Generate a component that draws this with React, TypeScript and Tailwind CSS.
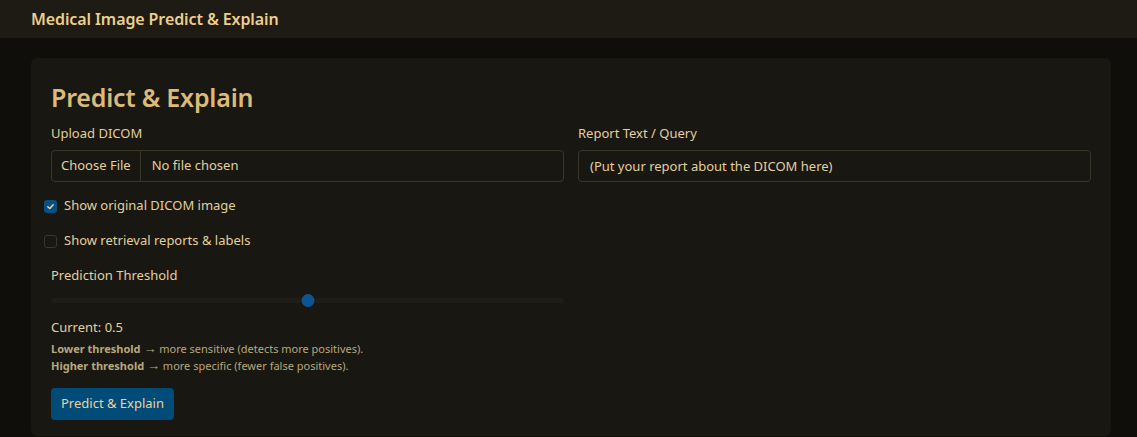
import { useState } from 'react';

export default function App() {
  const [showOriginal, setShowOriginal] = useState(true);
  const [showRetrieval, setShowRetrieval] = useState(false);
  const [threshold, setThreshold] = useState(0.5);

  return (
    <div className="min-h-[437px] bg-[#0f0e0b] text-[#e4cf9d] font-['Noto_Sans',sans-serif]">
      <header className="h-[38px] bg-[#1e1b15] px-[31px] flex items-center">
        <h1 className="text-[16px] font-semibold text-[#eccf8c] tracking-[-0.1px]">Medical Image Predict &amp; Explain</h1>
      </header>

      <main className="px-[31px] pt-[20px] pr-[26px]">
        <section className="bg-[#181712] rounded-md px-[20px] pt-[21px] pb-[16px]">
          <h2 className="text-[25px] font-semibold text-[#dcbb79] leading-[36px] tracking-[-0.2px]">Predict &amp; Explain</h2>

          <div className="grid grid-cols-2 gap-x-[14px] mt-[9px]">
            <div>
              <label className="block text-[13px] leading-[18px] mb-[8px]">Upload DICOM</label>
              <div className="h-[32px] flex items-center border border-[#3a3729] rounded-[4px] bg-[#181712] text-[13px]">
                <button className="h-full px-[9px] border-r border-[#3a3729] text-[#e4cf9d]">Choose File</button>
                <span className="px-[11px]">No file chosen</span>
              </div>

              <label className="flex items-center gap-[7px] mt-[16px] ml-[-7px] text-[13px] h-[16px] cursor-pointer">
                <span
                  onClick={() => setShowOriginal(!showOriginal)}
                  className={
                    showOriginal
                      ? 'w-[13px] h-[13px] rounded-[3px] bg-[#0a4f80] flex items-center justify-center'
                      : 'w-[13px] h-[13px] rounded-[3px] border border-[#3a3729] bg-[#181712]'
                  }
                >
                  {showOriginal && (
                    <svg width="9" height="9" viewBox="0 0 10 10">
                      <path d="M2 5.2 L4.2 7.3 L8 3" stroke="#e9d7ab" strokeWidth="1.6" fill="none" strokeLinecap="round" strokeLinejoin="round" />
                    </svg>
                  )}
                </span>
                <span>Show original DICOM image</span>
              </label>

              <label className="flex items-center gap-[7px] mt-[19px] ml-[-7px] text-[13px] h-[16px] cursor-pointer">
                <span
                  onClick={() => setShowRetrieval(!showRetrieval)}
                  className={
                    showRetrieval
                      ? 'w-[13px] h-[13px] rounded-[3px] bg-[#0a4f80] flex items-center justify-center'
                      : 'w-[13px] h-[13px] rounded-[3px] border border-[#3a3729] bg-[#181712]'
                  }
                >
                  {showRetrieval && (
                    <svg width="9" height="9" viewBox="0 0 10 10">
                      <path d="M2 5.2 L4.2 7.3 L8 3" stroke="#e9d7ab" strokeWidth="1.6" fill="none" strokeLinecap="round" strokeLinejoin="round" />
                    </svg>
                  )}
                </span>
                <span>Show retrieval reports &amp; labels</span>
              </label>

              <div className="mt-[17px] text-[13px] leading-[18px]">Prediction Threshold</div>

              <div className="relative h-[13px] mt-[10px]">
                <div className="absolute left-0 right-0 top-[4px] h-[5px] rounded-full bg-[#1f1d17]" />
                <div
                  className="absolute top-0 w-[13px] h-[13px] rounded-full bg-[#0a5592] -translate-x-1/2"
                  style={{ left: `${threshold * 100}%` }}
                />
                <input
                  type="range"
                  min={0}
                  max={1}
                  step={0.05}
                  value={threshold}
                  onChange={(e) => setThreshold(Number(e.target.value))}
                  className="absolute inset-0 w-full opacity-0 cursor-pointer"
                />
              </div>

              <div className="mt-[11px] text-[13px] leading-[18px]">Current: {threshold}</div>
              <div className="mt-[4px] text-[11px] leading-[17px] text-[#b9a77b]">
                <div>
                  <b className="font-bold">Lower threshold</b> <span className="text-[13px] leading-[10px]">→</span> more sensitive (detects more positives).
                </div>
                <div>
                  <b className="font-bold">Higher threshold</b> <span className="text-[13px] leading-[10px]">→</span> more specific (fewer false positives).
                </div>
              </div>

              <button className="mt-[14px] h-[32px] px-[10px] rounded-[4px] bg-[#014b79] text-[13px] text-[#ead39b]">
                Predict &amp; Explain
              </button>
            </div>

            <div>
              <label className="block text-[13px] leading-[18px] mb-[8px]">Report Text / Query</label>
              <input
                placeholder="(Put your report about the DICOM here)"
                className="w-full h-[32px] px-[11px] border border-[#3a3729] rounded-[4px] bg-[#181712] text-[13px] outline-none placeholder:text-[#e4cf9d]"
              />
            </div>
          </div>
        </section>
      </main>
    </div>
  );
}
